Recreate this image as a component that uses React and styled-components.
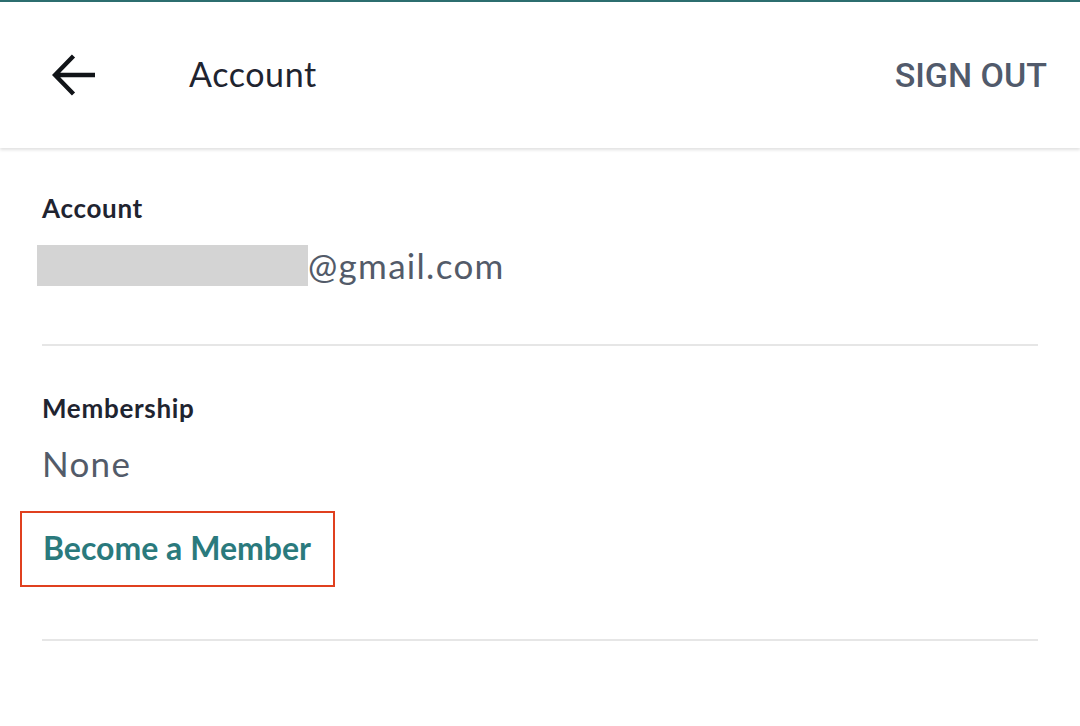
import React from "react";
import styled, { createGlobalStyle } from "styled-components";

const Global = createGlobalStyle`
  html, body { margin: 0; padding: 0; background: #ffffff; }
  body { font-family: "Lato", "Open Sans", sans-serif; }
  * { box-sizing: border-box; }
`;

const Page = styled.div`
  width: 1080px;
  height: 726px;
  background: #ffffff;
  border-top: 2px solid #2c6e6f;
  overflow: hidden;
`;

const Header = styled.header`
  height: 146px;
  display: flex;
  align-items: center;
  padding: 0 33px 0 52px;
  background: #ffffff;
  box-shadow: 0 2px 3px rgba(0, 0, 0, 0.12);
  position: relative;
  z-index: 1;
`;

const BackButton = styled.button`
  width: 44px;
  height: 44px;
  padding: 0;
  border: none;
  background: none;
  display: flex;
  align-items: center;
  justify-content: center;
  margin-right: 93px;
  cursor: pointer;
`;

const Title = styled.h1`
  flex: 1;
  margin: 0 0 4px;
  font-size: 34px;
  font-weight: 400;
  color: #1f2430;
  letter-spacing: 0.6px;
`;

const SignOut = styled.button`
  border: none;
  background: none;
  padding: 0;
  font-family: "Roboto", sans-serif;
  font-weight: 500;
  font-size: 34px;
  color: #515a6b;
  cursor: pointer;
`;

const Content = styled.main`
  padding: 0 42px;
`;

const Section = styled.section`
  padding: ${(p) => p.$pad};
  border-bottom: 2px solid #e6e6e6;
`;

const Label = styled.div`
  font-size: 26px;
  font-weight: 700;
  color: #1f2430;
  line-height: 32px;
  letter-spacing: 0.7px;
`;

const Value = styled.div`
  display: flex;
  align-items: center;
  font-size: 35px;
  color: #535b69;
  line-height: 42px;
  letter-spacing: 1.3px;
  margin-top: ${(p) => p.$mt};
`;

const Redacted = styled.span`
  display: inline-block;
  width: 271px;
  height: 41px;
  background: #d4d4d4;
  margin-left: -5px;
`;

const MemberLink = styled.a`
  display: inline-block;
  margin: 27px 0 0 -22px;
  padding: 17px 22px 19px 21px;
  border: 2px solid #e0401f;
  font-size: 32px;
  font-weight: 700;
  color: #2a7a7d;
  text-decoration: none;
  line-height: 36px;
  letter-spacing: 0;
`;

export default function App() {
  return (
    <>
      <Global />
      <Page>
        <Header>
          <BackButton aria-label="Back">
            <svg width="44" height="44" viewBox="0 0 44 44" fill="none">
              <path
                d="M43 22H3.5M21.5 3L3 22L21.5 41"
                stroke="#111418"
                strokeWidth="4.4"
              />
            </svg>
          </BackButton>
          <Title>Account</Title>
          <SignOut>SIGN OUT</SignOut>
        </Header>
        <Content>
          <Section $pad="44px 0 58px">
            <Label>Account</Label>
            <Value $mt="20px">
              <Redacted />
              @gmail.com
            </Value>
          </Section>
          <Section $pad="46px 0 52px">
            <Label>Membership</Label>
            <Value $mt="18px">None</Value>
            <MemberLink href="#">Become a Member</MemberLink>
          </Section>
        </Content>
      </Page>
    </>
  );
}
